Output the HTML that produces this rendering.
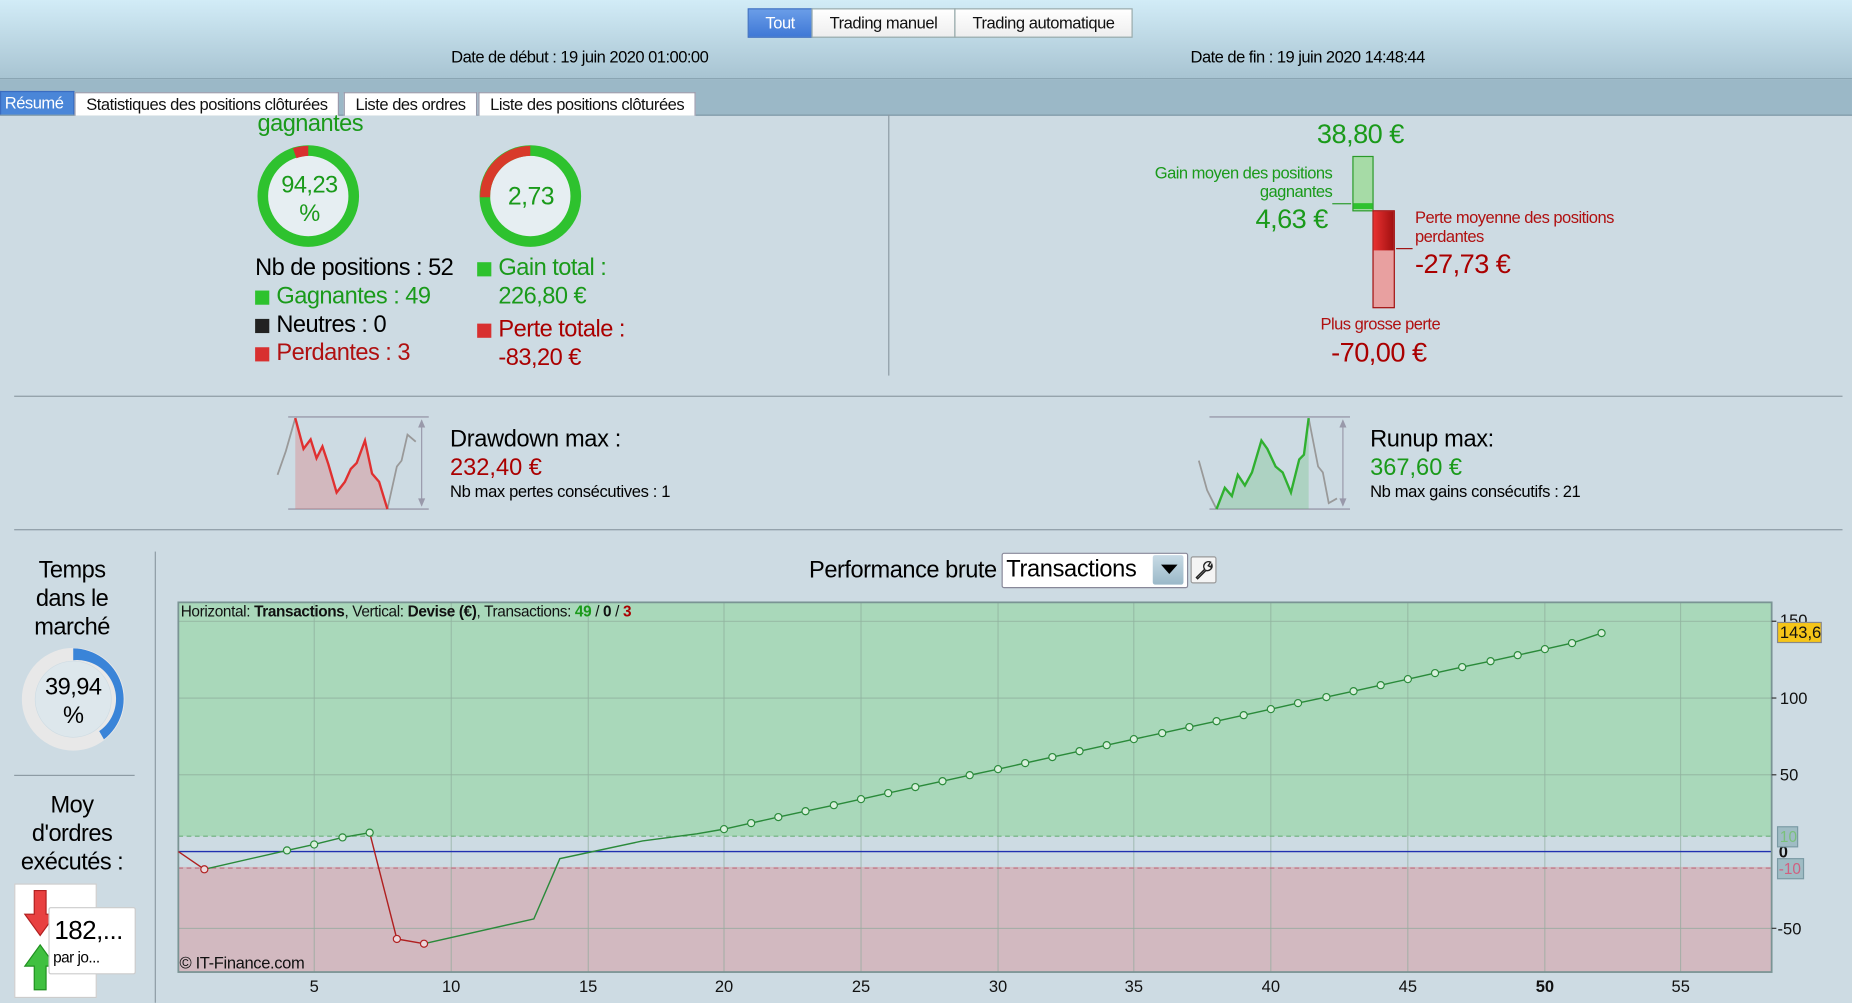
<!DOCTYPE html>
<html><head><meta charset="utf-8"><style>
html,body{margin:0;padding:0;width:1852px;height:1003px;overflow:hidden;background:#cddbe3;font-family:"Liberation Sans",Arial,sans-serif;}
#w{position:absolute;left:0;top:0;width:1568px;height:849px;transform:scale(1.1811);transform-origin:0 0;background:#cddbe3;}
.a{position:absolute;white-space:nowrap;}
.n{letter-spacing:-0.45px;}
.hdr{position:absolute;left:0;top:0;width:1568px;height:66px;background:linear-gradient(#d2ecf7,#a8c4d2);border-bottom:1px solid #8aa5b3;}
.seg{position:absolute;top:7px;height:23px;font-size:14px;line-height:23px;text-align:center;border:1px solid #9aa;background:linear-gradient(#fff,#eee);color:#111;letter-spacing:-0.4px;}
.tabbar{position:absolute;left:0;top:67px;width:1568px;height:30px;background:#9bb8c7;border-bottom:1px solid #7f98a6;}
.tab{position:absolute;top:11px;height:19px;font-size:14px;line-height:19px;padding:0 9px;background:#fff;border:1px solid #99a;border-bottom:none;color:#111;letter-spacing:-0.4px;}
.g{color:#1a9a1a}.r{color:#a00}
.sq{display:inline-block;width:12px;height:12px;margin-right:6px;vertical-align:-1px;}
.hl{position:absolute;height:1px;background:#8c9aa3;}
.vl{position:absolute;width:1px;background:#8c9aa3;}
</style></head><body><div id="w">
<div class="hdr"></div>
<div class="seg" style="left:633px;width:53px;background:linear-gradient(#6a9de8,#3f78d6);color:#fff;border-color:#3a6cc0">Tout</div>
<div class="seg" style="left:687px;width:120px">Trading manuel</div>
<div class="seg" style="left:808px;width:149px">Trading automatique</div>
<div class="a n" style="left:382px;top:40px;font-size:14px">Date de début : 19 juin 2020 01:00:00</div>
<div class="a n" style="left:1008px;top:40px;font-size:14px">Date de fin : 19 juin 2020 14:48:44</div>
<div class="tabbar"></div>
<div class="tab" style="left:0;top:77px;background:#4a86d8;color:#fff;border-color:#3a6cc0;padding:0 8px 0 3px">Résumé</div>
<div class="tab" style="left:63px;top:78px">Statistiques des positions clôturées</div>
<div class="tab" style="left:291px;top:78px">Liste des ordres</div>
<div class="tab" style="left:405px;top:78px">Liste des positions clôturées</div>

<div class="a g n" style="left:218px;top:94px;font-size:20px">gagnantes</div>
<svg class="a" style="left:210px;top:115px" width="300" height="110">
<circle cx="51" cy="51" r="38" fill="#e6eef2"/>
<circle cx="51" cy="51" r="38.5" fill="none" stroke="#2ec22e" stroke-width="9"/>
<path d="M51 8.5 A42.5 42.5 0 0 0 38 10.5 L41 19 A34 34 0 0 1 51 17Z" fill="#d83030"/>
<circle cx="239" cy="51" r="38" fill="#e6eef2"/>
<circle cx="239" cy="51" r="38.5" fill="none" stroke="#2ec22e" stroke-width="9"/>
<path d="M239 8.5 A42.5 42.5 0 0 0 196.5 52 L205 52 A34 34 0 0 1 239 17Z" fill="#d83a2a"/>
</svg>
<div class="a g n" style="left:232px;top:145px;font-size:20px;text-align:center;width:60px;line-height:24px;white-space:normal">94,23 %</div>
<div class="a g n" style="left:430px;top:155px;font-size:21px">2,73</div>
<div class="a n" style="left:216px;top:216px;font-size:20px">Nb de positions : 52</div>
<div class="a g n" style="left:216px;top:240px;font-size:20px"><span class="sq" style="background:#2ec22e"></span>Gagnantes : 49</div>
<div class="a n" style="left:216px;top:264px;font-size:20px"><span class="sq" style="background:#222"></span>Neutres : 0</div>
<div class="a r n" style="left:216px;top:288px;font-size:20px;color:#b01010"><span class="sq" style="background:#d83030"></span>Perdantes : 3</div>
<div class="a g n" style="left:404px;top:216px;font-size:20px"><span class="sq" style="background:#2ec22e"></span>Gain total :</div>
<div class="a g n" style="left:422px;top:240px;font-size:20px">226,80 €</div>
<div class="a r n" style="left:404px;top:268px;font-size:20px"><span class="sq" style="background:#d83030"></span>Perte totale :</div>
<div class="a r n" style="left:422px;top:292px;font-size:20px">-83,20 €</div>

<div class="vl" style="left:752px;top:97px;height:221px"></div>
<div class="a g n" style="left:1115px;top:100px;font-size:23px">38,80 €</div>
<div class="a g n" style="left:940px;top:138px;font-size:14px;text-align:right;width:188px;line-height:16px">Gain moyen des positions<br>gagnantes</div>
<div class="a g n" style="left:1063px;top:172px;font-size:23px">4,63 €</div>
<div class="a" style="left:1145px;top:132px;width:16px;height:45px;background:#a6dba6;border:1px solid #2a9a2a"></div>
<div class="a" style="left:1146px;top:172px;width:16px;height:5px;background:#2ec22e"></div>
<div class="a" style="left:1128px;top:172px;width:16px;height:1px;background:#2a9a2a"></div>
<div class="a" style="left:1162px;top:178px;width:17px;height:81px;background:#e8a0a0;border:1px solid #a01010"></div>
<div class="a" style="left:1163px;top:179px;width:17px;height:33px;background:linear-gradient(90deg,#e83030,#a01010)"></div>
<div class="a" style="left:1182px;top:210px;width:14px;height:1px;background:#a01010"></div>
<div class="a r n" style="left:1198px;top:176px;font-size:14px;line-height:16px;color:#b01010">Perte moyenne des positions<br>perdantes</div>
<div class="a r n" style="left:1198px;top:210px;font-size:23px">-27,73 €</div>
<div class="a r n" style="left:1118px;top:266px;font-size:14px;color:#b01010">Plus grosse perte</div>
<div class="a r n" style="left:1127px;top:285px;font-size:23px">-70,00 €</div>

<div class="hl" style="left:12px;top:335px;width:1548px"></div>
<svg class="a" style="left:230px;top:350px" width="140" height="85">
<line x1="14" y1="3" x2="133" y2="3" stroke="#99a" stroke-width="1.2"/><line x1="14" y1="81" x2="133" y2="81" stroke="#99a" stroke-width="1.2"/>
<line x1="127" y1="6" x2="127" y2="78" stroke="#99a"/><path d="M124 12 L127 5 L130 12Z M124 72 L127 79 L130 72Z" fill="#99a"/>
<path d="M20 4 L27 30 L33 22 L38 38 L43 28 L48 43 L55 67 L62 58 L67 47 L72 42 L79 23 L85 51 L91 58 L98 81 L20 81Z" fill="rgba(220,120,120,.35)"/>
<path d="M5 52 L12 32 L20 4" fill="none" stroke="#999" stroke-width="1.5"/>
<path d="M98 81 L106 45 L110 40 L115 18 L122 24" fill="none" stroke="#999" stroke-width="1.5"/>
<path d="M20 4 L27 30 L33 22 L38 38 L43 28 L48 43 L55 67 L62 58 L67 47 L72 42 L79 23 L85 51 L91 58 L98 81" fill="none" stroke="#e03030" stroke-width="2"/>
</svg>
<div class="a" style="left:381px;top:361px;font-size:20px;letter-spacing:-0.3px">Drawdown max :</div>
<div class="a r" style="left:381px;top:385px;font-size:20px">232,40 €</div>
<div class="a" style="left:381px;top:408px;font-size:14px;letter-spacing:-0.3px">Nb max pertes consécutives : 1</div>
<svg class="a" style="left:1010px;top:350px" width="140" height="85">
<line x1="14" y1="3" x2="133" y2="3" stroke="#99a" stroke-width="1.2"/><line x1="14" y1="81" x2="133" y2="81" stroke="#99a" stroke-width="1.2"/>
<line x1="127" y1="6" x2="127" y2="78" stroke="#99a"/><path d="M124 12 L127 5 L130 12Z M124 72 L127 79 L130 72Z" fill="#99a"/>
<path d="M20 81 L27 63 L33 70 L38 52 L44 61 L50 50 L58 23 L63 30 L70 45 L76 50 L83 67 L90 39 L94 35 L98 4 L98 81Z" fill="rgba(100,190,120,.3)"/>
<path d="M5 40 L12 65 L20 81" fill="none" stroke="#999" stroke-width="1.5"/>
<path d="M98 4 L106 45 L110 50 L115 76 L122 72" fill="none" stroke="#999" stroke-width="1.5"/>
<path d="M20 81 L27 63 L33 70 L38 52 L44 61 L50 50 L58 23 L63 30 L70 45 L76 50 L83 67 L90 39 L94 35 L98 4" fill="none" stroke="#30b030" stroke-width="2"/>
</svg>
<div class="a" style="left:1160px;top:361px;font-size:20px;letter-spacing:-0.3px">Runup max:</div>
<div class="a g" style="left:1160px;top:385px;font-size:20px">367,60 €</div>
<div class="a" style="left:1160px;top:408px;font-size:14px;letter-spacing:-0.3px">Nb max gains consécutifs : 21</div>
<div class="hl" style="left:12px;top:448px;width:1548px"></div>

<div class="a n" style="left:15px;top:471px;width:92px;text-align:center;font-size:20px;line-height:24px;white-space:normal">Temps dans le marché</div>
<svg class="a" style="left:18px;top:548px" width="90" height="90">
<circle cx="44" cy="44" r="38" fill="none" stroke="#e8e8e8" stroke-width="11"/>
<circle cx="44" cy="44" r="32" fill="#dde7ec"/>
<path d="M44 1 A43 43 0 0 1 70 78 L66 71 A33 33 0 0 0 44 11Z" fill="#3a84d8"/>
</svg>
<div class="a n" style="left:32px;top:570px;width:60px;text-align:center;font-size:20px;line-height:24px;white-space:normal">39,94 %</div>
<div class="hl" style="left:12px;top:656px;width:102px"></div>
<div class="a n" style="left:10px;top:670px;width:102px;text-align:center;font-size:20px;line-height:24px;white-space:normal">Moy<br>d'ordres<br>exécutés :</div>
<div class="a" style="left:12px;top:748px;width:68px;height:95px;background:#fff;border:1px solid #ccc"></div>
<svg class="a" style="left:20px;top:752px" width="32" height="88">
<path d="M9 2 H19 V22 H27 L14 40 L1 22 H9Z" fill="#e84040" stroke="#b02020"/>
<path d="M14 48 L27 66 H19 V86 H9 V66 H1Z" fill="#40c040" stroke="#209020"/>
</svg>
<div class="a" style="left:41px;top:768px;width:72px;height:55px;background:#fff;border:1px solid #ccc;border-radius:2px"></div>
<div class="a n" style="left:46px;top:775px;font-size:22px">182,...</div>
<div class="a n" style="left:45px;top:803px;font-size:13px">par jo...</div>
<div class="vl" style="left:131px;top:467px;height:382px"></div>

<div class="a" style="left:685px;top:472px;font-size:20px;letter-spacing:-0.4px">Performance brute</div>
<div class="a" style="left:848px;top:468px;width:156px;height:28px;background:#fff;border:1px solid #889;border-radius:2px"></div>
<div class="a" style="left:852px;top:471px;font-size:20px;letter-spacing:-0.3px">Transactions</div>
<div class="a" style="left:976px;top:470px;width:26px;height:25px;background:linear-gradient(#c8dbe6,#9ab8c8);border-radius:2px"></div>
<svg class="a" style="left:981px;top:476px" width="18" height="12"><path d="M2 2 H16 L9 10Z" fill="#000"/></svg>
<div class="a" style="left:1008px;top:471px;width:20px;height:21px;background:#f4f4f4;border:1px solid #999;border-radius:2px"></div>
<svg class="a" style="left:1009px;top:472px" width="20" height="20"><path d="M4 17 L11 10 A4 4 0 0 1 16 4 L14 7 L16 8 L17 6 A4 4 0 0 1 12 11 L5 18Z" fill="none" stroke="#222" stroke-width="1.2"/></svg>

<svg class="a" style="left:0;top:500px" width="1568" height="349">
<g transform="translate(0,-500)">
<rect x="151" y="510" width="1349" height="313" fill="#cddbe3"/>
<rect x="151" y="510" width="1349" height="198" fill="#a9d8ba"/>
<rect x="151" y="734" width="1349" height="89" fill="#d2b9c0"/>
<g stroke="#8aa898" stroke-width="0.7" opacity="0.8">
<line x1="266" y1="510" x2="266" y2="823"/><line x1="382" y1="510" x2="382" y2="823"/><line x1="498" y1="510" x2="498" y2="823"/><line x1="613" y1="510" x2="613" y2="823"/><line x1="729" y1="510" x2="729" y2="823"/><line x1="845" y1="510" x2="845" y2="823"/><line x1="960" y1="510" x2="960" y2="823"/><line x1="1076" y1="510" x2="1076" y2="823"/><line x1="1192" y1="510" x2="1192" y2="823"/><line x1="1308" y1="510" x2="1308" y2="823"/><line x1="1423" y1="510" x2="1423" y2="823"/>
<line x1="151" y1="526" x2="1500" y2="526"/><line x1="151" y1="591" x2="1500" y2="591"/><line x1="151" y1="656" x2="1500" y2="656"/><line x1="151" y1="786" x2="1500" y2="786"/>
</g>
<line x1="151" y1="708" x2="1500" y2="708" stroke="#6cb07a" stroke-dasharray="4,3"/>
<line x1="151" y1="735" x2="1500" y2="735" stroke="#c07888" stroke-dasharray="4,3"/>
<line x1="151" y1="721" x2="1500" y2="721" stroke="#2030b0" stroke-width="1.2"/>
<rect x="151" y="510" width="1349" height="313" fill="none" stroke="#7a9494" stroke-width="1.5"/>
<path d="M151 721 L173 736 M313 705 L336 795 L359 799" fill="none" stroke="#b02020" stroke-width="1.2"/>
<path d="M173 736 L243 720 L266 715 L290 709 L313 705 M359 799 L452 778 L474 727 L544 712 L590 706 L613 702" fill="none" stroke="#2a8a3a" stroke-width="1.2"/>
<polyline fill="none" stroke="#2a8a3a" stroke-width="1.2" points="613,702 636,696.9 659,691.8 682,686.8 706,681.7 729,676.6 752,671.5 775,666.4 798,661.4 821,656.3 845,651.2 868,646.1 891,641 914,636 937,630.9 960,625.8 984,620.7 1007,615.6 1030,610.6 1053,605.5 1076,600.4 1099,595.3 1123,590.2 1146,585.2 1169,580.1 1192,575 1215,569.9 1238,564.8 1262,559.8 1285,554.7 1308,549.6 1331,544.5 1356,536"/>
<g fill="#d8f0dc" stroke="#2a8a3a" stroke-width="1">
<circle cx="243" cy="720" r="3"/><circle cx="266" cy="715" r="3"/><circle cx="290" cy="709" r="3"/><circle cx="313" cy="705" r="3"/>
<circle cx="613" cy="702" r="3"/><circle cx="636" cy="696.9" r="3"/><circle cx="659" cy="691.8" r="3"/><circle cx="682" cy="686.8" r="3"/><circle cx="706" cy="681.7" r="3"/><circle cx="729" cy="676.6" r="3"/><circle cx="752" cy="671.5" r="3"/><circle cx="775" cy="666.4" r="3"/><circle cx="798" cy="661.4" r="3"/><circle cx="821" cy="656.3" r="3"/><circle cx="845" cy="651.2" r="3"/><circle cx="868" cy="646.1" r="3"/><circle cx="891" cy="641" r="3"/><circle cx="914" cy="636" r="3"/><circle cx="937" cy="630.9" r="3"/><circle cx="960" cy="625.8" r="3"/><circle cx="984" cy="620.7" r="3"/><circle cx="1007" cy="615.6" r="3"/><circle cx="1030" cy="610.6" r="3"/><circle cx="1053" cy="605.5" r="3"/><circle cx="1076" cy="600.4" r="3"/><circle cx="1099" cy="595.3" r="3"/><circle cx="1123" cy="590.2" r="3"/><circle cx="1146" cy="585.2" r="3"/><circle cx="1169" cy="580.1" r="3"/><circle cx="1192" cy="575" r="3"/><circle cx="1215" cy="569.9" r="3"/><circle cx="1238" cy="564.8" r="3"/><circle cx="1262" cy="559.8" r="3"/><circle cx="1285" cy="554.7" r="3"/><circle cx="1308" cy="549.6" r="3"/><circle cx="1331" cy="544.5" r="3"/><circle cx="1356" cy="536" r="3"/>
</g>
<g fill="#ecd8dc" stroke="#b02020" stroke-width="1"><circle cx="173" cy="736" r="3"/><circle cx="336" cy="795" r="3"/><circle cx="359" cy="799" r="3"/></g>
<text x="153" y="522" font-size="13" font-family="Liberation Sans,sans-serif" fill="#111" letter-spacing="-0.3">Horizontal: <tspan font-weight="bold">Transactions</tspan>, Vertical: <tspan font-weight="bold">Devise (€)</tspan>, Transactions: <tspan font-weight="bold" fill="#1a9a1a">49</tspan> / <tspan font-weight="bold">0</tspan> / <tspan font-weight="bold" fill="#a00">3</tspan></text>
<text x="152" y="820" font-size="14" font-family="Liberation Sans,sans-serif" fill="#111" letter-spacing="-0.3">© IT-Finance.com</text>
<g font-size="14" font-family="Liberation Sans,sans-serif" fill="#111" text-anchor="middle">
<text x="266" y="840">5</text><text x="382" y="840">10</text><text x="498" y="840">15</text><text x="613" y="840">20</text><text x="729" y="840">25</text><text x="845" y="840">30</text><text x="960" y="840">35</text><text x="1076" y="840">40</text><text x="1192" y="840">45</text><text x="1308" y="840" font-weight="bold">50</text><text x="1423" y="840">55</text>
</g>
<g stroke="#333"><line x1="1500" y1="526" x2="1504" y2="526"/><line x1="1500" y1="591" x2="1504" y2="591"/><line x1="1500" y1="656" x2="1504" y2="656"/><line x1="1500" y1="786" x2="1504" y2="786"/></g>
<g font-size="14" font-family="Liberation Sans,sans-serif" fill="#111">
<text x="1507" y="530">150</text><text x="1507" y="596">100</text><text x="1507" y="661">50</text><text x="1505" y="791">-50</text><text x="1506" y="726" font-weight="bold">0</text></g>
<rect x="1505" y="527" width="37" height="17" fill="#f5c518" stroke="#888"/>
<text x="1507" y="540" font-size="14" font-family="Liberation Sans,sans-serif" fill="#111">143,6</text>
<rect x="1505" y="700" width="17" height="17" fill="#9fbcc4" stroke="#7a9aa4"/>
<text x="1507" y="713" font-size="13" font-family="Liberation Sans,sans-serif" fill="#7ac07a">10</text>
<rect x="1505" y="727" width="22" height="17" fill="#9fbcc4" stroke="#7a9aa4"/>
<text x="1506" y="740" font-size="13" font-family="Liberation Sans,sans-serif" fill="#d06080">-10</text>
</g>
</svg>
</div></body></html>
